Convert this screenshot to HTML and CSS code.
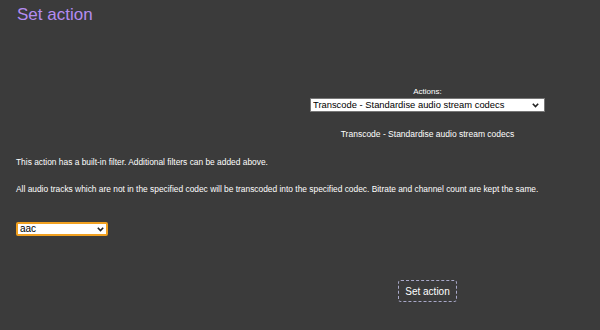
FILE: index.html
```html
<!DOCTYPE html>
<html>
<head>
<meta charset="utf-8">
<link rel="stylesheet" href="styles.css">
</head>
<body>
<div class="page">
  <h1 class="title">Set action</h1>
  <div class="actions-row">
    <div class="actions">
      <label class="actions-label">Actions:</label>
      <span class="select-wrap actions-wrap">
        <select class="actions-select">
          <option>Transcode - Standardise audio stream codecs</option>
        </select>
        <svg class="chevron" width="7" height="5" viewBox="0 0 7 5"><path d="M0.8 0.8 L3.5 3.6 L6.2 0.8" fill="none" stroke="#222" stroke-width="1.6"/></svg>
      </span>
      <div class="actions-name">Transcode - Standardise audio stream codecs</div>
    </div>
  </div>
  <p class="note first">This action has a built-in filter. Additional filters can be added above.</p>
  <p class="note">All audio tracks which are not in the specified codec will be transcoded into the specified codec. Bitrate and channel count are kept the same.</p>
  <span class="select-wrap codec-wrap">
    <select class="codec-select">
      <option>aac</option>
    </select>
    <svg class="chevron" width="7" height="5" viewBox="0 0 7 5"><path d="M0.8 0.8 L3.5 3.6 L6.2 0.8" fill="none" stroke="#222" stroke-width="1.6"/></svg>
  </span>
  <div class="button-row">
    <button class="set-button">Set action</button>
  </div>
</div>
</body>
</html>
```
FILE: styles.css
```css
html, body {
  margin: 0;
  padding: 0;
  background: #3b3b3b;
  font-family: "Liberation Sans", Arial, sans-serif;
  color: #ffffff;
}
.page {
  width: 600px;
  height: 330px;
  padding: 0 0 0 16px;
  box-sizing: border-box;
  display: flex;
  flex-direction: column;
  align-items: flex-start;
}
.title {
  margin: 5px 0 0 1px;
  font-size: 17px;
  font-weight: normal;
  line-height: 20px;
  color: #b48cf2;
}
.actions-row {
  align-self: stretch;
  display: flex;
  justify-content: flex-end;
  padding-right: 55px;
  margin-top: 62px;
}
.actions {
  width: 235px;
  display: flex;
  flex-direction: column;
  align-items: center;
}
.actions-label {
  font-size: 8px;
  line-height: 10px;
  color: #ffffff;
}
.select-wrap {
  position: relative;
  display: block;
}
.chevron {
  position: absolute;
  top: 5px;
  display: block;
}
.actions-wrap {
  margin-top: 1px;
}
.actions-wrap .chevron {
  right: 6px;
}
.actions-select {
  display: block;
  appearance: none;
  -webkit-appearance: none;
  width: 235px;
  height: 14px;
  margin: 0;
  padding: 0 0 0 2px;
  font-family: "Liberation Sans", Arial, sans-serif;
  font-size: 9.4px;
  line-height: 12px;
  color: #000;
  background: #fff;
  border: 1px solid #767676;
  border-radius: 0;
}
.actions-name {
  margin-top: 17px;
  font-size: 8.5px;
  line-height: 10px;
}
.note {
  margin: 0;
  font-size: 8.4px;
  line-height: 10px;
  color: #ffffff;
}
.note.first {
  margin-top: 18px;
}
.note + .note {
  margin-top: 17px;
}
.codec-wrap {
  margin-top: 28px;
}
.codec-wrap .chevron {
  right: 4px;
}
.codec-select {
  display: block;
  appearance: none;
  -webkit-appearance: none;
  width: 92px;
  height: 14px;
  margin: 0;
  padding: 0 0 0 2px;
  font-family: "Liberation Sans", Arial, sans-serif;
  font-size: 10px;
  line-height: 10px;
  color: #000;
  background: #fff;
  border: 2px solid #f0a020;
  border-radius: 2px;
}
.button-row {
  align-self: stretch;
  display: flex;
  padding-left: 382px;
  margin-top: 44px;
}
.set-button {
  width: 59px;
  height: 22px;
  padding: 0;
  font-family: "Liberation Sans", Arial, sans-serif;
  font-size: 10px;
  color: #ffffff;
  background: transparent;
  border: 1px dashed #a9a9c9;
  border-radius: 3px;
}
```
